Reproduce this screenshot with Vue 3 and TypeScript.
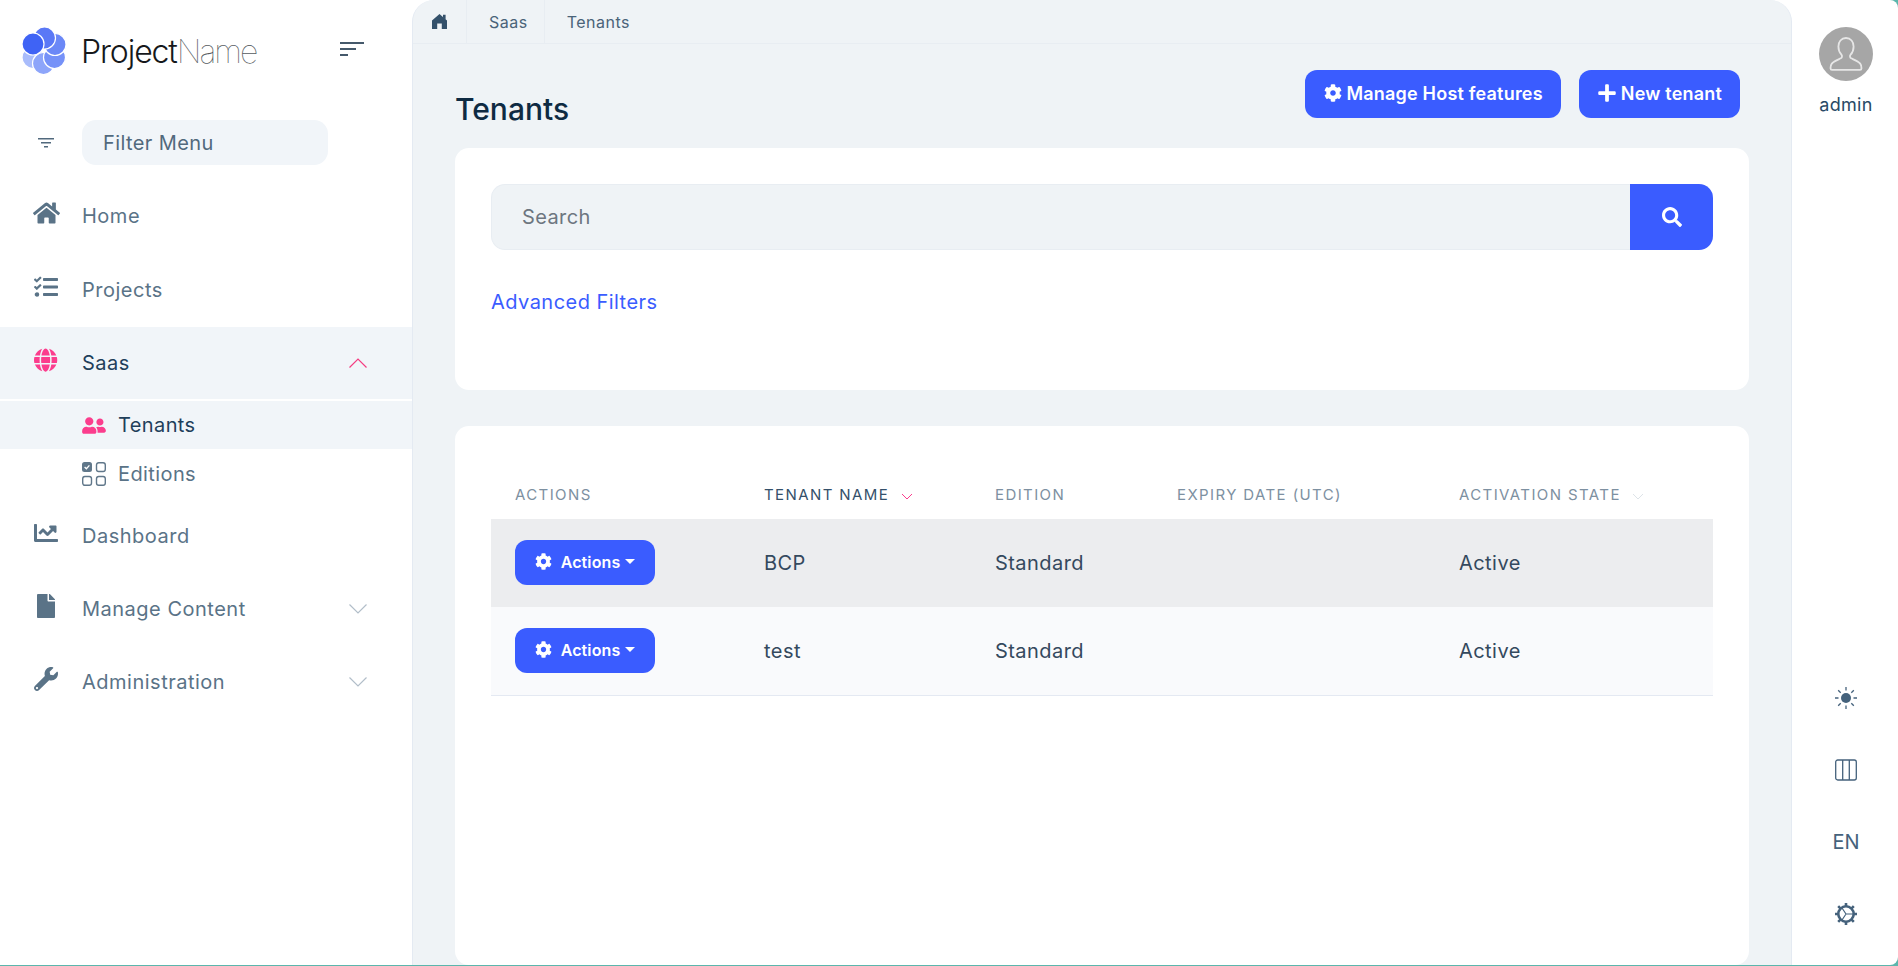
<script setup lang="ts">
interface NavItem {
  label: string;
  icon: string;
  box: string;
  chevron?: "up" | "down";
  active?: boolean;
}

const paths: Record<string, string> = {
  home: "M280.37 148.26L96 300.11V464a16 16 0 0 0 16 16l112.06-.29a16 16 0 0 0 15.92-16V368a16 16 0 0 1 16-16h64a16 16 0 0 1 16 16v95.64a16 16 0 0 0 16 16.05L464 480a16 16 0 0 0 16-16V300L295.67 148.26a12.19 12.19 0 0 0-15.3 0zM571.6 251.47L488 182.56V44.05a12 12 0 0 0-12-12h-56a12 12 0 0 0-12 12v72.61L318.47 43a48 48 0 0 0-61 0L4.34 251.47a12 12 0 0 0-1.6 16.9l25.5 31A12 12 0 0 0 45.15 301l235.22-193.74a12.19 12.19 0 0 1 15.3 0L530.9 301a12 12 0 0 0 16.9-1.6l25.5-31a12 12 0 0 0-1.7-16.93z",
  tasks: "M139.61 35.5a12 12 0 0 0-17 0L58.93 98.81l-22.7-22.12a12 12 0 0 0-17 0L3.53 92.41a12 12 0 0 0 0 17l47.59 47.4a12.78 12.78 0 0 0 17.61 0l15.59-15.62L156.52 69a12.09 12.09 0 0 0 .09-17zm0 159.19a12 12 0 0 0-17 0l-63.68 63.72-22.7-22.1a12 12 0 0 0-17 0L3.53 252a12 12 0 0 0 0 17L51 316.5a12.77 12.77 0 0 0 17.6 0l15.7-15.69 72.2-72.22a12 12 0 0 0 .09-16.9zM64 368c-26.49 0-48.59 21.5-48.59 48S37.53 464 64 464a48 48 0 0 0 0-96zm432 16H208a16 16 0 0 0-16 16v32a16 16 0 0 0 16 16h288a16 16 0 0 0 16-16v-32a16 16 0 0 0-16-16zm0-320H208a16 16 0 0 0-16 16v32a16 16 0 0 0 16 16h288a16 16 0 0 0 16-16V80a16 16 0 0 0-16-16zm0 160H208a16 16 0 0 0-16 16v32a16 16 0 0 0 16 16h288a16 16 0 0 0 16-16v-32a16 16 0 0 0-16-16z",
  globe: "M336.5 160C322 70.7 287.8 8 248 8s-74 62.7-88.5 152h177zM152 256c0 22.2 1.2 43.5 3.3 64h185.3c2.1-20.5 3.3-41.8 3.3-64s-1.2-43.5-3.3-64H155.3c-2.1 20.5-3.3 41.8-3.3 64zm324.7-96c-28.6-67.9-86.5-120.4-158-141.6 24.4 33.8 41.2 84.7 50 141.6h108zM177.2 18.4C105.8 39.6 47.8 92.1 19.3 160h108c8.7-56.9 25.5-107.8 49.9-141.6zM487.4 192H372.7c2.1 21 3.3 42.5 3.3 64s-1.2 43-3.3 64h114.6c5.5-20.5 8.6-41.8 8.6-64s-3.1-43.5-8.5-64zM120 256c0-21.5 1.2-43 3.3-64H8.6C3.2 212.5 0 233.8 0 256s3.2 43.5 8.6 64h114.6c-2-21-3.2-42.5-3.2-64zm39.5 96c14.5 89.3 48.7 152 88.5 152s74-62.7 88.5-152h-177zm159.3 141.6c71.4-21.2 129.4-73.7 158-141.6h-108c-8.8 56.9-25.6 107.8-50 141.6zM19.3 352c28.6 67.9 86.5 120.4 158 141.6-24.4-33.8-41.2-84.7-50-141.6h-108z",
  friends: "M192 256c61.9 0 112-50.1 112-112S253.9 32 192 32 80 82.1 80 144s50.1 112 112 112zm76.8 32h-8.3c-20.8 10-43.9 16-68.5 16s-47.6-6-68.5-16h-8.3C51.6 288 0 339.6 0 403.2V432c0 26.5 21.5 48 48 48h288c26.5 0 48-21.5 48-48v-28.8c0-63.6-51.6-115.2-115.2-115.2zM480 256c53 0 96-43 96-96s-43-96-96-96-96 43-96 96 43 96 96 96zm48 32h-3.8c-13.9 4.8-28.6 8-44.2 8s-30.3-3.2-44.2-8H432c-20.4 0-39.2 5.9-55.7 15.4 24.4 26.3 39.7 61.2 39.7 99.8v38.4c0 2.2-.5 4.3-.6 6.4H592c26.5 0 48-21.5 48-48 0-61.9-50.1-112-112-112z",
  chart: "M496 384H64V80c0-8.84-7.16-16-16-16H16C7.16 64 0 71.16 0 80v336c0 17.67 14.33 32 32 32h464c8.84 0 16-7.16 16-16v-32c0-8.84-7.16-16-16-16zM464 96H345.94c-21.38 0-32.09 25.85-16.97 40.97l32.4 32.4L288 242.75l-73.37-73.37c-12.5-12.5-32.76-12.5-45.25 0l-68.69 68.69c-6.25 6.25-6.25 16.38 0 22.63l22.62 22.62c6.25 6.25 16.38 6.25 22.63 0L192 237.25l73.37 73.37c12.5 12.5 32.76 12.5 45.25 0l96-96 32.4 32.4c15.12 15.12 40.97 4.41 40.97-16.97V112c.01-8.84-7.15-16-16-16z",
  file: "M224 136V0H24C10.7 0 0 10.7 0 24v464c0 13.3 10.7 24 24 24h336c13.3 0 24-10.7 24-24V160H248c-13.2 0-24-10.8-24-24zm160-14.1v6.1H256V0h6.1c6.4 0 12.5 2.5 17 7l97.9 98c4.5 4.5 7 10.6 7 16.9z",
  wrench: "M507.73 109.1c-2.24-9.03-13.54-12.09-20.12-5.51l-74.36 74.36-67.88-11.31-11.31-67.88 74.36-74.36c6.62-6.62 3.43-17.9-5.66-20.16-47.38-11.74-99.55.91-136.58 37.93-39.64 39.64-50.55 97.1-34.05 147.2L18.74 402.76c-24.99 24.99-24.99 65.51 0 90.5 24.99 24.99 65.51 24.99 90.5 0l213.21-213.21c50.12 16.71 107.47 5.68 147.37-34.22 37.07-37.07 49.7-89.32 37.91-136.73zM64 472c-13.25 0-24-10.75-24-24 0-13.26 10.75-24 24-24s24 10.74 24 24c0 13.25-10.75 24-24 24z",
  cog: "M487.4 315.7l-42.6-24.6c4.3-23.2 4.3-47 0-70.2l42.6-24.6c4.9-2.8 7.1-8.6 5.5-14-11.1-35.6-30-67.8-54.7-94.6-3.8-4.1-10-5.1-14.8-2.3L380.8 110c-17.9-15.4-38.5-27.3-60.8-35.1V25.8c0-5.6-3.9-10.5-9.4-11.7-36.7-8.2-74.3-7.8-109.2 0-5.5 1.2-9.4 6.1-9.4 11.7V75c-22.2 7.9-42.8 19.8-60.8 35.1L88.7 85.5c-4.9-2.8-11-1.9-14.8 2.3-24.7 26.7-43.6 58.9-54.7 94.6-1.7 5.4.6 11.2 5.5 14L67.3 221c-4.3 23.2-4.3 47 0 70.2l-42.6 24.6c-4.9 2.8-7.1 8.6-5.5 14 11.1 35.6 30 67.8 54.7 94.6 3.8 4.1 10 5.1 14.8 2.3l42.6-24.6c17.9 15.4 38.5 27.3 60.8 35.1v49.2c0 5.6 3.9 10.5 9.4 11.7 36.7 8.2 74.3 7.8 109.2 0 5.5-1.2 9.4-6.1 9.4-11.7v-49.2c22.2-7.9 42.8-19.8 60.8-35.1l42.6 24.6c4.9 2.8 11 1.9 14.8-2.3 24.7-26.7 43.6-58.9 54.7-94.6 1.5-5.5-.7-11.3-5.6-14.1zM256 336c-44.1 0-80-35.9-80-80s35.9-80 80-80 80 35.9 80 80-35.9 80-80 80z",
  search: "M505 442.7L405.3 343c-4.5-4.5-10.6-7-17-7H372c27.6-35.3 44-79.7 44-128C416 93.1 322.9 0 208 0S0 93.1 0 208s93.1 208 208 208c48.3 0 92.7-16.4 128-44v16.3c0 6.4 2.5 12.5 7 17l99.7 99.7c9.4 9.4 24.6 9.4 33.9 0l28.3-28.3c9.4-9.4 9.4-24.6.1-34zM208 336c-70.7 0-128-57.2-128-128 0-70.7 57.2-128 128-128 70.7 0 128 57.2 128 128 0 70.7-57.2 128-128 128z",
  plus: "M416 208H272V64c0-17.67-14.33-32-32-32h-32c-17.67 0-32 14.33-32 32v144H32c-17.67 0-32 14.33-32 32v32c0 17.67 14.33 32 32 32h144v144c0 17.67 14.33 32 32 32h32c17.67 0 32-14.33 32-32V304h144c17.67 0 32-14.33 32-32v-32c0-17.67-14.33-32-32-32z",
};

const topNav: NavItem[] = [
  { label: "Home", icon: "home", box: "0 0 576 512" },
  { label: "Projects", icon: "tasks", box: "0 0 512 512" },
  { label: "Saas", icon: "globe", box: "0 0 496 512", chevron: "up", active: true },
];

const bottomNav: NavItem[] = [
  { label: "Dashboard", icon: "chart", box: "0 0 512 512" },
  { label: "Manage Content", icon: "file", box: "0 0 384 512", chevron: "down" },
  { label: "Administration", icon: "wrench", box: "0 0 512 512", chevron: "down" },
];

// petals go round the logo centre, each one lying over the one before it
const petals = [
  { cx: 33, cy: 57.5, fill: "#a9bcfb" },
  { cx: 43.5, cy: 63.5, fill: "#8da5fa" },
  { cx: 54.5, cy: 57.5, fill: "#7591f8" },
  { cx: 55, cy: 44.5, fill: "#6b88f7" },
  { cx: 44.5, cy: 38, fill: "#5a78f6" },
  { cx: 33, cy: 44, fill: "#3f63f5" },
];

const columns = [
  { label: "Actions", width: 249 },
  { label: "Tenant name", width: 231, sort: "active" },
  { label: "Edition", width: 182 },
  { label: "Expiry date (UTC)", width: 282 },
  { label: "Activation state", width: 278, sort: "idle" },
];

const tenants = [
  { name: "BCP", edition: "Standard", expiry: "", state: "Active" },
  { name: "test", edition: "Standard", expiry: "", state: "Active" },
];
</script>

<template>
  <div class="frame">
    <div class="shell">
      <aside class="sidebar">
        <div class="brand">
          <svg class="logo" viewBox="22 27 44 48" width="44" height="48">
            <circle
              v-for="(p, i) in petals"
              :key="i"
              :cx="p.cx"
              :cy="p.cy"
              r="11"
              :fill="p.fill"
              stroke="#fff"
              stroke-width="1.2"
            />
          </svg>
          <span class="brand-name">Project<em>Name</em></span>
          <svg class="toggle" viewBox="0 0 24 14" width="24" height="14">
            <rect x="0" y="0" width="24" height="2" fill="#45596b" />
            <rect x="0" y="6" width="16" height="2" fill="#45596b" />
            <rect x="0" y="12" width="8" height="2" fill="#45596b" />
          </svg>
        </div>

        <div class="filter">
          <svg class="filter-icon" viewBox="0 0 16 10" width="16" height="10">
            <rect x="0" y="0" width="16" height="1.5" fill="#51697d" />
            <rect x="3" y="4" width="10" height="1.5" fill="#51697d" />
            <rect x="6" y="8" width="4" height="1.5" fill="#51697d" />
          </svg>
          <div class="filter-box">Filter Menu</div>
        </div>

        <nav>
          <a v-for="item in topNav" :key="item.label" class="nav-item" :class="{ active: item.active }">
            <span class="nav-icon">
              <svg :viewBox="item.box" height="24"><path :d="paths[item.icon]" fill="currentColor" /></svg>
            </span>
            <span class="nav-label">{{ item.label }}</span>
            <svg v-if="item.chevron" class="chevron" viewBox="0 0 18 10" width="18" height="10">
              <path v-if="item.chevron === 'up'" d="M0.5 9.5L9 1l8.5 8.5" fill="none" stroke="currentColor" stroke-width="1.2" />
              <path v-else d="M0.5 0.5L9 9l8.5-8.5" fill="none" stroke="currentColor" stroke-width="1.2" />
            </svg>
          </a>

          <a class="sub-item active">
            <svg viewBox="0 0 640 512" width="24" height="19"><path :d="paths.friends" fill="currentColor" /></svg>
            <span>Tenants</span>
          </a>
          <a class="sub-item">
            <svg viewBox="0 0 24 24" width="24" height="24">
              <rect x="0" y="0" width="10" height="10" rx="2.5" fill="#60778a" />
              <path d="M2.6 5l1.8 1.8 3-3.4" fill="none" stroke="#fff" stroke-width="1.3" />
              <rect x="14.5" y="0.7" width="8.8" height="8.8" rx="2.2" fill="none" stroke="#60778a" stroke-width="1.4" />
              <rect x="0.7" y="14.5" width="8.8" height="8.8" rx="2.2" fill="none" stroke="#60778a" stroke-width="1.4" />
              <rect x="14.5" y="14.5" width="8.8" height="8.8" rx="2.2" fill="none" stroke="#60778a" stroke-width="1.4" />
            </svg>
            <span>Editions</span>
          </a>

          <a v-for="item in bottomNav" :key="item.label" class="nav-item">
            <span class="nav-icon">
              <svg :viewBox="item.box" height="24"><path :d="paths[item.icon]" fill="currentColor" /></svg>
            </span>
            <span class="nav-label">{{ item.label }}</span>
            <svg v-if="item.chevron" class="chevron" viewBox="0 0 18 10" width="18" height="10">
              <path d="M0.5 0.5L9 9l8.5-8.5" fill="none" stroke="currentColor" stroke-width="1.2" />
            </svg>
          </a>
        </nav>
      </aside>

      <main class="main">
        <div class="crumbs">
          <span class="crumb crumb-home">
            <svg viewBox="0 0 15 15" width="15" height="15">
              <path d="M7.500 0L15 6.500V15H9.800V9.500H5.200V15H0V6.500zM11 0.800h2.600v4.400L11 3z" fill="#34516b" />
            </svg>
          </span>
          <span class="crumb">Saas</span>
          <span class="crumb crumb-last">Tenants</span>
        </div>

        <div class="content">
          <div class="page-head">
            <h1>Tenants</h1>
            <div class="head-actions">
              <button class="btn">
                <svg viewBox="0 0 512 512" width="18" height="18"><path :d="paths.cog" fill="currentColor" /></svg>
                <span>Manage Host features</span>
              </button>
              <button class="btn">
                <svg viewBox="0 0 448 512" width="18" height="20"><path :d="paths.plus" fill="currentColor" /></svg>
                <span>New tenant</span>
              </button>
            </div>
          </div>

          <section class="card search-card">
            <div class="search">
              <div class="search-input">Search</div>
              <button class="search-btn">
                <svg viewBox="0 0 512 512" width="20" height="20"><path :d="paths.search" fill="currentColor" /></svg>
              </button>
            </div>
            <a class="advanced">Advanced Filters</a>
          </section>

          <section class="card table-card">
            <table>
              <colgroup>
                <col v-for="c in columns" :key="c.label" :style="{ width: c.width + 'px' }" />
              </colgroup>
              <thead>
                <tr>
                  <th v-for="c in columns" :key="c.label" :class="{ sorted: c.sort === 'active' }">
                    {{ c.label }}
                    <svg v-if="c.sort" class="sort" :class="c.sort" viewBox="0 0 12 7" width="12" height="7">
                      <path d="M1 1l5 5 5-5" fill="none" stroke="currentColor" stroke-width="1" />
                    </svg>
                  </th>
                </tr>
              </thead>
              <tbody>
                <tr v-for="t in tenants" :key="t.name">
                  <td>
                    <button class="btn btn-row">
                      <svg viewBox="0 0 512 512" width="17" height="17"><path :d="paths.cog" fill="currentColor" /></svg>
                      <span>Actions</span>
                      <i class="caret"></i>
                    </button>
                  </td>
                  <td>{{ t.name }}</td>
                  <td>{{ t.edition }}</td>
                  <td>{{ t.expiry }}</td>
                  <td>{{ t.state }}</td>
                </tr>
              </tbody>
            </table>
          </section>
        </div>
      </main>

      <aside class="rail">
        <div class="user">
          <svg viewBox="0 0 54 54" width="54" height="54">
            <circle cx="27" cy="27" r="27" fill="#a6a6a6" />
            <path
              d="M27 11c-4.800 0-7.600 3.800-7.600 8.400 0 3.400 1.200 6.300 3 8.300 1 1.100.8 2.900-.6 3.600-3.200 1.500-7 2.900-9 5.300-1 1.200-1.300 2.900-1.300 4.600 0 1 .6 1.600 1.500 1.600h28c.9 0 1.500-.6 1.500-1.600 0-1.700-.3-3.400-1.300-4.600-2-2.400-5.800-3.800-9-5.300-1.400-.7-1.600-2.500-.6-3.600 1.800-2 3-4.900 3-8.300 0-4.600-2.800-8.400-7.600-8.400z"
              fill="none"
              stroke="#e6e6e6"
              stroke-width="1.8"
            />
          </svg>
          <span class="user-name">admin</span>
        </div>

        <div class="rail-tools">
          <svg viewBox="0 0 22 22" width="22" height="22">
            <circle cx="11" cy="11" r="5" fill="#45627c" />
            <path d="M11 0v3.500M11 18.500V22M0 11h3.500M18.500 11H22M3.200 3.200l2.500 2.500M16.300 16.300l2.500 2.500M3.200 18.800l2.500-2.500M16.300 5.700l2.500-2.500" stroke="#45627c" stroke-width="1.300" fill="none" />
          </svg>
          <svg viewBox="0 0 22 22" width="22" height="22">
            <rect x="0.700" y="1" width="20.600" height="20" rx="2" fill="none" stroke="#45627c" stroke-width="1.300" />
            <path d="M7.700 1v20M14.300 1v20" stroke="#45627c" stroke-width="1.300" />
          </svg>
          <span class="lang">EN</span>
          <svg viewBox="0 0 22 22" width="22" height="22">
            <circle cx="11" cy="11" r="7.700" fill="none" stroke="#45627c" stroke-width="2.600" />
            <path d="M11 11h7M11 11L7 5M11 11l-4 6" stroke="#45627c" stroke-width="1.200" fill="none" />
            <path d="M11 0v3M11 19v3M0 11h3M19 11h3M3.200 3.200l2.200 2.200M16.600 16.600l2.200 2.200M3.200 18.800l2.200-2.200M16.600 5.400l2.200-2.200" stroke="#45627c" stroke-width="2.600" fill="none" />
          </svg>
        </div>
      </aside>
    </div>
  </div>
</template>

<style>
html,
body {
  margin: 0;
  height: 100%;
  overflow: hidden;
}
</style>

<style scoped>
.frame {
  height: 966px;
  background: #5bb6ac;
  font-family: Inter, "Liberation Sans", sans-serif;
  color: #4f6a80;
  overflow: hidden;
}

.shell {
  display: grid;
  grid-template-columns: 412px 1380px 106px;
  height: 965px;
  background: #fff;
  border-radius: 0 8px 8px 0;
  overflow: hidden;
}

.sidebar {
  display: flex;
  flex-direction: column;
  min-width: 0;
}

.brand {
  display: flex;
  align-items: center;
  height: 102px;
  padding-left: 22px;
  box-sizing: border-box;
}

.brand-name {
  margin-left: 15px;
  font-size: 32px;
  font-weight: 300;
  letter-spacing: -1.1px;
  color: #16181b;
}

.brand-name em {
  font-style: normal;
  font-weight: 100;
  letter-spacing: -2px;
  color: #555b60;
}

.toggle {
  margin-left: auto;
  margin-right: 48px;
  margin-top: -4px;
}

.filter {
  display: flex;
  align-items: center;
  height: 45px;
  margin-top: 18px;
  padding-left: 38px;
}

.filter-icon {
  flex: none;
  margin-right: 28px;
}

.filter-box {
  width: 246px;
  height: 45px;
  box-sizing: border-box;
  padding-left: 21px;
  line-height: 46px;
  border-radius: 14px;
  background: #f1f5f9;
  font-size: 20px;
  letter-spacing: 0.4px;
  color: #51697d;
}

nav {
  margin-top: 14px;
  display: flex;
  flex-direction: column;
}

.nav-item {
  display: flex;
  align-items: center;
  height: 73px;
  font-size: 20px;
  letter-spacing: 0.5px;
  color: #5a7387;
}

.nav-item:first-child {
  height: 74px;
}

.nav-item.active {
  height: 72px;
  margin-top: 1px;
  background: #f1f5f9;
  color: #1f3f5b;
}

.nav-icon {
  flex: none;
  display: flex;
  justify-content: center;
  box-sizing: border-box;
  width: 46px;
  margin-left: 23px;
  margin-right: 13px;
  transform: translateY(-3px);
}

.nav-icon svg {
  display: block;
}

.nav-item.active .nav-icon,
.sub-item.active svg {
  color: #fb3d8d;
}

.chevron {
  margin-left: auto;
  margin-right: 45px;
  color: #b2bec9;
}

.nav-item.active .chevron {
  color: #f43d82;
}

.sub-item {
  display: flex;
  align-items: center;
  gap: 12px;
  height: 48px;
  padding-left: 82px;
  font-size: 20px;
  letter-spacing: 0.4px;
  color: #5a7387;
}

.sub-item.active {
  margin-top: 2px;
  background: #f1f5f9;
  color: #1f3f5b;
}

.sub-item:not(.active) {
  height: 50px;
}

.main {
  display: flex;
  flex-direction: column;
  background: #eff3f6;
  border-left: 1px solid #e4eaf2;
  border-right: 1px solid #e4eaf2;
  border-radius: 22px 22px 0 0;
  box-sizing: border-box;
  min-width: 0;
}

.crumbs {
  display: flex;
  align-items: stretch;
  height: 44px;
  box-sizing: border-box;
  border-bottom: 1px solid #e8edf2;
  font-size: 16px;
  letter-spacing: 0.5px;
  color: #4a6379;
  flex: none;
}

.crumb {
  display: flex;
  align-items: center;
  padding: 0 16px 0 22px;
  border-right: 1px solid #e8edf2;
}

.crumb-home {
  width: 54px;
  box-sizing: border-box;
  padding: 0 0 0 19px;
}

.crumb-last {
  border-right: 0;
}

.content {
  display: flex;
  flex-direction: column;
  padding: 26px 42px 0;
  min-height: 0;
  flex: 1;
}

.page-head {
  display: flex;
  justify-content: space-between;
  align-items: flex-start;
  height: 78px;
  flex: none;
}

h1 {
  margin: 20px 0 0;
  font-size: 30px;
  line-height: 38px;
  font-weight: 500;
  color: #0e2a42;
}

.head-actions {
  display: flex;
  gap: 18px;
  margin-right: 9px;
}

.btn {
  display: inline-flex;
  align-items: center;
  justify-content: center;
  gap: 5px;
  height: 48px;
  padding: 0 18px 2px 19px;
  border: 0;
  border-radius: 12px;
  background: #3a5cff;
  color: #fff;
  font: 600 18px Inter, "Liberation Sans", sans-serif;
  letter-spacing: 0.2px;
}

.card {
  background: #fff;
  border-radius: 14px;
  padding: 36px;
  box-sizing: border-box;
}

.search-card {
  height: 242px;
  flex: none;
}

.search {
  display: flex;
  height: 66px;
}

.search-input {
  flex: 1;
  padding-left: 30px;
  line-height: 64px;
  font-size: 20px;
  letter-spacing: 0.4px;
  color: #6d7680;
  background: #eff3f6;
  border: 1px solid #e8edf2;
  border-right: 0;
  border-radius: 14px 0 0 14px;
}

.search-btn {
  width: 83px;
  border: 0;
  background: #3a5cff;
  color: #fff;
  border-radius: 0 14px 14px 0;
  display: flex;
  align-items: center;
  justify-content: center;
}

.advanced {
  display: block;
  margin-top: 40px;
  font-size: 20px;
  line-height: 24px;
  letter-spacing: 0.46px;
  color: #3a5cff;
}

.table-card {
  margin-top: 36px;
  flex: 1;
  min-height: 0;
}

table {
  width: 100%;
  table-layout: fixed;
  border-collapse: collapse;
}

th {
  height: 57px;
  box-sizing: border-box;
  padding: 0 0 16px 24px;
  vertical-align: bottom;
  text-align: left;
  font-size: 15px;
  line-height: 17px;
  font-weight: 400;
  letter-spacing: 1.4px;
  text-transform: uppercase;
  color: #7d90a1;
  white-space: nowrap;
}

th.sorted {
  color: #34506a;
}

.sort {
  margin-left: 6px;
  color: #fb3d8d;
}

.sort.idle {
  color: #dde3e8;
}

td {
  height: 88px;
  padding: 0 0 0 24px;
  font-size: 20px;
  letter-spacing: 0.45px;
  color: #34495e;
}

tbody tr:nth-child(1) {
  background: #ecedef;
}

tbody tr:nth-child(2) {
  background: #f9fafc;
  border-bottom: 1px solid #e4e9f2;
}

.btn-row {
  display: flex;
  width: 140px;
  height: 45px;
  padding: 0 0 2px;
  gap: 0;
  font-size: 16px;
  letter-spacing: 0.1px;
  margin-top: -1px;
}

.btn-row span {
  margin-left: 9px;
}

.caret {
  margin-left: 5px;
  border-top: 5px solid #fff;
  border-left: 5px solid transparent;
  border-right: 5px solid transparent;
}

.rail {
  display: flex;
  flex-direction: column;
  align-items: center;
  min-width: 0;
  padding-left: 2px;
}

.user {
  display: flex;
  flex-direction: column;
  align-items: center;
  margin-top: 27px;
}

.user-name {
  margin-top: 13px;
  font-size: 18px;
  line-height: 22px;
  letter-spacing: 0.3px;
  color: #284a66;
}

.rail-tools {
  margin-top: auto;
  margin-bottom: 40px;
  display: flex;
  flex-direction: column;
  align-items: center;
  gap: 50px;
}

.rail-tools svg {
  display: block;
}

.lang {
  font-size: 20px;
  line-height: 22px;
  color: #45627c;
}
</style>
